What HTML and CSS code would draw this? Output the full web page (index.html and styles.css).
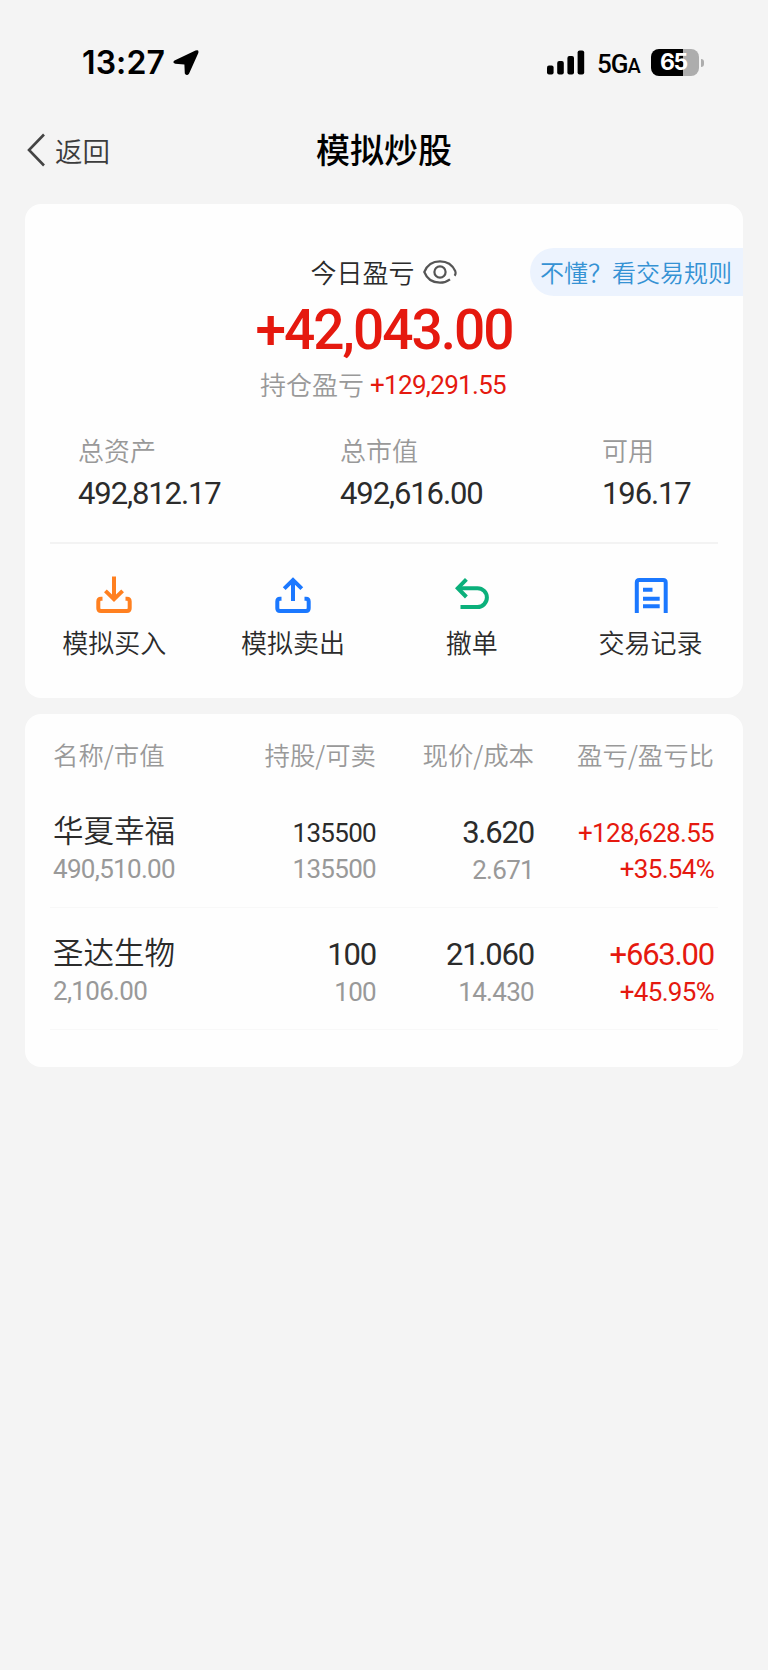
FILE: index.html
```html
<!DOCTYPE html>
<html lang="zh-CN">
    <head>
        <meta charset="UTF-8">
        <meta name="viewport" content="width=device-width, initial-scale=1.0">
        <title>模拟炒股</title>
        <link rel="stylesheet" href="styles.css">
    </head>

    <body>
        <div class="statusbar">
            <div class="time">13:27</div>
            <svg class="location" width="26" height="26" viewBox="0 0 26 26">
                <path d="M1.5 10.6 L22.5 0.6 Q26.4 -0.6 25.2 3.2 L16 23.8 Q13.8 26.6 11.8 23.4 L11.4 14.6 L2.2 13.8 Q-1 12.6 1.5 10.6 Z"/>
            </svg>
            <svg class="signal" width="38" height="25" viewBox="0 0 38 25">
                <rect x="0" y="15.5" width="6.6" height="9" rx="2"/>
                <rect x="10.2" y="11" width="6.6" height="13.5" rx="2"/>
                <rect x="20.4" y="6" width="6.6" height="18.5" rx="2"/>
                <rect x="30.6" y="0.5" width="6.6" height="24" rx="2"/>
            </svg>
            <div class="network">5G<span>A</span></div>
            <div class="battery">65</div>
            <div class="battery-tip"></div>
        </div>

        <div class="navbar">
            <a class="back" href="#">
                <svg width="20" height="34" viewBox="0 0 20 34" fill="none" stroke="#444" stroke-width="2.6">
                    <path d="M19 1.5 L4 17 L19 32.5"/>
                </svg>
                返回
            </a>
            <h1>模拟炒股</h1>
        </div>

        <div class="card summary">
            <div class="today">
                <span>今日盈亏</span>
                <svg width="34" height="24" viewBox="0 0 34 24" fill="none" stroke="#555" stroke-width="2.2">
                    <path d="M31.6 15.8 Q33.2 13.8 32.2 11 C29.5 5 24 1.3 17 1.3 C10 1.3 4 5 1.3 12 C4 19 10 22.7 17 22.7 Q22.5 22.7 27 19.3"/>
                    <circle cx="17" cy="12" r="5.6"/>
                </svg>
                <a class="rules" href="#">不懂？看交易规则</a>
            </div>
            <div class="today-value num">+42,043.00</div>
            <div class="holding">
                <span>持仓盈亏</span>
                <span class="num red">+129,291.55</span>
            </div>

            <div class="stats">
                <div>
                    <div class="label">总资产</div>
                    <div class="value num">492,812.17</div>
                </div>
                <div>
                    <div class="label">总市值</div>
                    <div class="value num">492,616.00</div>
                </div>
                <div>
                    <div class="label">可用</div>
                    <div class="value num">196.17</div>
                </div>
            </div>

            <div class="actions">
                <a href="#">
                    <svg width="36" height="38" viewBox="0 0 36 38" fill="none" stroke="#ff8020" stroke-width="4">
                        <path d="M18 0.5 V23 M9.4 14.9 L18 23.2 L26.6 14.9"/>
                        <path d="M6.5 22.7 H5 Q2.3 22.7 2.3 25.4 V32.3 Q2.3 35 5 35 H31 Q33.7 35 33.7 32.3 V25.4 Q33.7 22.7 31 22.7 H29.5"/>
                    </svg>
                    模拟买入
                </a>
                <a href="#">
                    <svg width="36" height="38" viewBox="0 0 36 38" fill="none" stroke="#1b78ff" stroke-width="4">
                        <path d="M18 25 V4 M9.2 12.6 L18 4 L26.8 12.6"/>
                        <path d="M6.5 22.7 H5 Q2.3 22.7 2.3 25.4 V32.3 Q2.3 35 5 35 H31 Q33.7 35 33.7 32.3 V25.4 Q33.7 22.7 31 22.7 H29.5"/>
                    </svg>
                    模拟卖出
                </a>
                <a href="#">
                    <svg width="36" height="38" viewBox="0 0 36 38" fill="none" stroke="#0bb07b" stroke-width="4">
                        <path d="M12.4 3.4 L3.8 12.2 L12.4 21"/>
                        <path d="M4 12.2 H23.5 A9.3 9.3 0 0 1 23.5 31 H6.5"/>
                    </svg>
                    撤单
                </a>
                <a href="#">
                    <svg width="36" height="38" viewBox="0 0 36 38" fill="none" stroke="#1b78ff" stroke-width="4">
                        <path d="M3.8 37 V6.5 Q3.8 4 6.3 4 H30.2 Q32.7 4 32.7 6.5 V37"/>
                        <path d="M10 13.7 H19.5 M10 22.8 H26.7 M10 30.2 H26.7"/>
                    </svg>
                    交易记录
                </a>
            </div>
        </div>

        <div class="card positions">
            <div class="row head">
                <div>名称/市值</div>
                <div>持股/可卖</div>
                <div>现价/成本</div>
                <div>盈亏/盈亏比</div>
            </div>
            <div class="row">
                <div>
                    <p class="name">华夏幸福</p>
                    <p class="num sub">490,510.00</p>
                </div>
                <div>
                    <p class="num small">135500</p>
                    <p class="num sub">135500</p>
                </div>
                <div>
                    <p class="num">3.620</p>
                    <p class="num sub">2.671</p>
                </div>
                <div class="red">
                    <p class="num small">+128,628.55</p>
                    <p class="num small">+35.54%</p>
                </div>
            </div>
            <div class="row">
                <div>
                    <p class="name">圣达生物</p>
                    <p class="num sub">2,106.00</p>
                </div>
                <div>
                    <p class="num">100</p>
                    <p class="num sub">100</p>
                </div>
                <div>
                    <p class="num">21.060</p>
                    <p class="num sub">14.430</p>
                </div>
                <div class="red">
                    <p class="num">+663.00</p>
                    <p class="num small">+45.95%</p>
                </div>
            </div>
        </div>
    </body>
</html>
```
FILE: styles.css
```css
* {
    box-sizing: border-box;
}
body {
    margin: 0;
    padding: 0 25px;
    font-family: "Noto Sans CJK SC", sans-serif;
    font-size: 26px;
    font-weight: 350;
    color: #2b2b2b;
    background-color: #f4f4f4;
}
a {
    color: inherit;
    text-decoration: none;
}
p {
    margin: 0;
}
.num {
    font-family: Roboto, sans-serif;
    font-weight: 450;
}
.red {
    color: #e5190f;
}

/* phone status bar */
.statusbar {
    display: flex;
    align-items: center;
    height: 125px;
    padding: 0 39px 0 57px;
    color: #000;
}
.time {
    width: 91px;
    font-family: Inter, sans-serif;
    font-size: 32px;
    font-weight: 600;
    letter-spacing: 0.1px;
}
.signal {
    margin-left: auto;
}
.network {
    width: 44px;
    margin: 2px 10px 0 12px;
    font-family: Roboto, sans-serif;
    font-size: 26px;
    font-weight: 500;
    letter-spacing: -1px;
}
.network span {
    font-size: 20px;
}
.battery {
    width: 48px;
    height: 27px;
    border-radius: 8px;
    background: linear-gradient(to right, #000 66%, #adadad 66%);
    color: white;
    font-family: Inter, sans-serif;
    font-size: 23px;
    font-weight: 700;
    line-height: 27px;
    text-align: center;
    letter-spacing: -1.4px;
    text-indent: -3px;
}
.battery-tip {
    width: 3px;
    height: 8px;
    margin-left: 2px;
    border-radius: 0 4px 4px 0;
    background-color: #adadad;
}

.navbar {
    display: grid;
    grid-template-columns: 1fr auto 1fr;
    align-items: center;
    height: 50px;
    margin-bottom: 29px;
}
.back {
    display: flex;
    align-items: center;
    gap: 10px;
    font-size: 27.5px;
    line-height: 44px;
    color: #3c3c3c;
}
.navbar h1 {
    margin: 0;
    padding-bottom: 2px;
    font-size: 34px;
    font-weight: 500;
    line-height: 48px;
    color: #000;
}

.card {
    margin-bottom: 16px;
    border-radius: 16px;
    background-color: #fefefe;
}
.summary {
    height: 494px;
    padding-top: 44px;
}
.today {
    position: relative;
    display: flex;
    align-items: center;
    justify-content: center;
    gap: 8px;
    height: 48px;
    line-height: 46px;
    padding: 0 1px 0 0;
}
.rules {
    position: absolute;
    top: 0;
    right: 0;
    width: 213px;
    padding-left: 10px;
    border-radius: 24px 0 0 24px;
    background-color: #ecf3fe;
    font-size: 24px;
    line-height: 48px;
    white-space: nowrap;
    color: #3592d4;
}
.today-value {
    font-size: 55px;
    font-weight: 500;
    line-height: 69px;
    text-align: center;
    letter-spacing: -2px;
    color: #e5190f;
}
.holding {
    display: flex;
    justify-content: center;
    gap: 6px;
    height: 38px;
    padding-right: 2px;
    line-height: 38px;
    color: #999;
}
.holding .num {
    line-height: 41px;
    letter-spacing: -0.7px;
}
.stats {
    display: grid;
    grid-template-columns: 262px 262px auto;
    height: 141px;
    margin: 0 25px;
    padding: 25px 28px 0;
    border-bottom: 2px solid #f3f3f3;
}
.label {
    line-height: 44px;
    color: #999;
}
.value {
    font-size: 31px;
    line-height: 43px;
    letter-spacing: -1.1px;
}
.actions {
    display: flex;
    padding: 32px 3px 0 0;
}
.actions a {
    display: flex;
    flex: 1;
    flex-direction: column;
    align-items: center;
    line-height: 56px;
}

.positions {
    height: 353px;
    padding: 0 25px;
}
.row {
    display: grid;
    grid-template-columns: 160px 162px 158px 180px;
    align-items: center;
    height: 122px;
    padding: 8px 4px 0;
    border-bottom: 1px solid #f8f8f8;
    text-align: right;
}
.row > div:first-child {
    margin-left: -1px;
    text-align: left;
}
.row .num {
    font-size: 31px;
    line-height: 39px;
    letter-spacing: -1.2px;
}
.row .small,
.row .sub {
    font-size: 26px;
    line-height: 36px;
    letter-spacing: -0.7px;
}
.row .sub {
    font-weight: 400;
    color: #999;
}
.row .name {
    margin-top: -6px;
    font-size: 30.5px;
    line-height: 43px;
}
.row.head {
    height: 72px;
    border-bottom: none;
    font-size: 25.4px;
    color: #999;
}
```
